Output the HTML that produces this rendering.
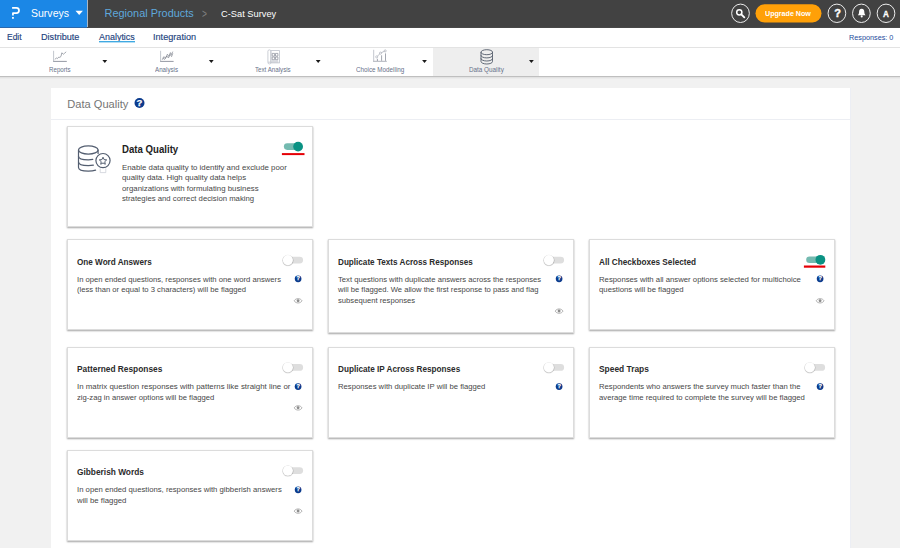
<!DOCTYPE html>
<html><head><meta charset="utf-8"><title>Data Quality</title>
<style>
*{box-sizing:border-box;margin:0;padding:0}
html,body{width:900px;height:548px;overflow:hidden;background:#f1f1f1;font-family:"Liberation Sans",sans-serif}
#r{position:relative;width:900px;height:548px;overflow:hidden}
.b{position:absolute;display:block}
.t{position:absolute;display:block;white-space:nowrap;transform-origin:0 50%}
.card{background:#fff;border:1px solid #dcdcdc;box-shadow:0 1px 1.6px rgba(0,0,0,.36)}
.q{border-radius:50%;background:#0b3b8d;color:#fff;font-weight:bold;text-align:center;-webkit-text-stroke:0.25px #fff}
</style></head><body><div id="r">
<div class="b" style="left:0px;top:0px;width:900px;height:27px;background:#424242;"></div>
<div class="b" style="left:0px;top:27px;width:900px;height:1px;background:#484848;"></div>
<div class="b" style="left:0px;top:0px;width:87px;height:27px;background:#1b87e6;"></div>
<div class="b" style="left:0px;top:27px;width:87px;height:1px;background:#2a68ad;"></div>
<div class="b" style="left:87px;top:0px;width:1px;height:27px;background:#a9b7c5;"></div>
<svg class="b" style="left:9px;top:6px" width="14" height="15" viewBox="0 0 14 15"><path d="M3.1 1.8 H7.4 A2.6 2.6 0 0 1 7.4 7 H3.95 V9.6" fill="none" stroke="#fff" stroke-width="1.75" stroke-linejoin="round"/><rect x="3.05" y="11" width="1.8" height="1.85" rx="0.3" fill="#fff"/></svg>
<span class="t" style="left:31.00px;top:6.70px;font-size:10.5px;line-height:12px;color:#fff;letter-spacing:0.010px;">Surveys</span>
<svg class="b" style="left:74px;top:9px" width="11" height="8" viewBox="0 0 11 8"><path d="M1.5 1.8 H8.9 L5.2 6.1 Z" fill="#fff"/></svg>
<span class="t" style="left:104.50px;top:7.00px;font-size:10.9px;line-height:12px;color:#5fa8dc;letter-spacing:0.019px;">Regional Products</span>
<span class="t" style="left:201.60px;top:7.00px;font-size:12px;line-height:14px;color:#808080;transform:scaleX(0.6984);">&gt;</span>
<span class="t" style="left:221.00px;top:8.00px;font-size:9.9px;line-height:11px;color:#fff;transform:scaleX(0.9398);">C-Sat Survey</span>
<svg class="b" style="left:729px;top:0px" width="22" height="27" viewBox="0 0 22 27"><ellipse cx="11.50" cy="13.30" rx="8.85" ry="9.2" fill="none" stroke="#ececec" stroke-width="1"/></svg>
<svg class="b" style="left:735px;top:8px" width="11" height="11" viewBox="0 0 11 11"><circle cx="4.3" cy="4.3" r="2.6" fill="none" stroke="#fff" stroke-width="1.5"/><path d="M6.3 6.3 L9.3 9.3" stroke="#fff" stroke-width="1.9" stroke-linecap="round"/></svg>
<svg class="b" style="left:754px;top:0px" width="70" height="27" viewBox="0 0 70 27"><rect x="1.5" y="4.3" width="66" height="18.1" rx="9.05" fill="#ffa008"/></svg>
<span class="t" style="left:765.40px;top:9.00px;font-size:8.1px;line-height:9px;color:#fff;font-weight:bold;transform:scaleX(0.8798);">Upgrade Now</span>
<svg class="b" style="left:825px;top:0px" width="22" height="27" viewBox="0 0 22 27"><ellipse cx="11.90" cy="13.30" rx="8.85" ry="9.2" fill="none" stroke="#ececec" stroke-width="1"/></svg>

<span class="t" style="left:834.20px;top:7.00px;font-size:11px;line-height:12px;color:#fff;font-weight:bold;-webkit-text-stroke:0.4px #fff;">?</span>
<svg class="b" style="left:850px;top:0px" width="22" height="27" viewBox="0 0 22 27"><ellipse cx="11.40" cy="13.30" rx="8.85" ry="9.2" fill="none" stroke="#ececec" stroke-width="1"/></svg>
<svg class="b" style="left:856.8px;top:7.9px" width="9.4" height="10.4" viewBox="0 0 10 11"><path d="M5 0.8 C2.9 0.8 2.2 2.6 2.2 4.3 C2.2 6.2 1.4 6.9 0.9 7.7 H9.1 C8.6 6.9 7.8 6.2 7.8 4.3 C7.8 2.6 7.1 0.8 5 0.8 Z" fill="#fff"/><circle cx="5" cy="8.9" r="1.1" fill="#fff"/></svg>
<svg class="b" style="left:875px;top:0px" width="22" height="27" viewBox="0 0 22 27"><ellipse cx="11.00" cy="13.30" rx="8.85" ry="9.2" fill="none" stroke="#ececec" stroke-width="1"/></svg>

<span class="t" style="left:883.40px;top:7.60px;font-size:9.6px;line-height:11px;color:#fff;font-weight:bold;transform:scaleX(0.8505);-webkit-text-stroke:0.3px #fff;">A</span>
<div class="b" style="left:0px;top:28px;width:900px;height:19px;background:#fff;"></div>
<div class="b" style="left:0px;top:47px;width:900px;height:1px;background:#e3e3e3;"></div>
<span class="t" style="left:6.80px;top:31.00px;font-size:9.9px;line-height:11px;color:#1c3f7d;transform:scaleX(0.8572);-webkit-text-stroke:0.15px #1c3f7d;">Edit</span>
<span class="t" style="left:40.90px;top:31.00px;font-size:9.9px;line-height:11px;color:#1c3f7d;transform:scaleX(0.9204);-webkit-text-stroke:0.15px #1c3f7d;">Distribute</span>
<span class="t" style="left:99.20px;top:31.00px;font-size:9.9px;line-height:11px;color:#1c3f7d;transform:scaleX(0.9060);-webkit-text-stroke:0.15px #1c3f7d;">Analytics</span>
<div class="b" style="left:99.2px;top:41px;width:36px;height:1px;background:#3fa9e2;"></div>
<div class="b" style="left:99.2px;top:42px;width:36px;height:1px;background:#b5def4;"></div>
<span class="t" style="left:153.40px;top:31.00px;font-size:9.9px;line-height:11px;color:#1c3f7d;transform:scaleX(0.9235);-webkit-text-stroke:0.15px #1c3f7d;">Integration</span>
<span class="t" style="left:848.60px;top:33.00px;font-size:7.8px;line-height:9px;color:#1c4b9c;transform:scaleX(0.9311);">Responses: 0</span>
<div class="b" style="left:0px;top:48px;width:900px;height:28px;background:#fff;"></div>
<div class="b" style="left:433px;top:48px;width:106.4px;height:28px;background:#eeeeee;"></div>
<div class="b" style="left:0px;top:76px;width:900px;height:1px;background:#bfbfbf;"></div>
<div class="b" style="left:0px;top:77px;width:900px;height:1px;background:#e2e2e2;"></div>
<div class="b" style="left:0px;top:78px;width:900px;height:1px;background:#ebebeb;"></div>
<svg class="b" style="left:53.2px;top:50.2px" width="15" height="13" viewBox="0 0 15 13"><path d="M0.6 0.8V11.4" fill="none" stroke="#b3b7c0" stroke-width="0.8"/><path d="M0.2 11.4H13.8" fill="none" stroke="#878c98" stroke-width="0.9"/><path d="M1.8 9.4 L3.4 8 L4.4 8.6 L5.8 7 L6.8 7.4 L8 6.4 L8.8 2.8 L10.4 4.2 L11.4 3.4 L13.2 1.8" fill="none" stroke="#7d828e" stroke-width="0.7"/></svg>
<span class="t" style="left:48.90px;top:65.00px;font-size:7.2px;line-height:9px;color:#687189;transform:scaleX(0.8581);">Reports</span>
<svg class="b" style="left:101px;top:58px" width="8" height="7" viewBox="0 0 8 7"><path d="M1.40 2.1 H6.20 L3.80 5 Z" fill="#1a1a1a"/></svg>
<svg class="b" style="left:160px;top:50px" width="15" height="13" viewBox="0 0 15 13"><path d="M0.6 0.8V11.4" fill="none" stroke="#b3b7c0" stroke-width="0.8"/><path d="M0.2 11.4H13.6" fill="none" stroke="#878c98" stroke-width="0.9"/><path d="M2.2 9.8 L4 6.6 L5.4 8.4 L7.4 4.2 L8.8 6.4 L10.4 2.6 L11.4 4.6 L12.8 1.6 M2.6 8 L4.6 9.4 L6.8 6 L8.4 8 L10.2 4.4 L11.6 6.6 L12.8 3.4" fill="none" stroke="#6f7480" stroke-width="0.6"/></svg>
<span class="t" style="left:155.25px;top:65.00px;font-size:7.2px;line-height:9px;color:#687189;transform:scaleX(0.8630);">Analysis</span>
<svg class="b" style="left:207px;top:58px" width="8" height="7" viewBox="0 0 8 7"><path d="M1.90 2.1 H6.70 L4.30 5 Z" fill="#1a1a1a"/></svg>
<svg class="b" style="left:266.5px;top:48.5px" width="14" height="16" viewBox="0 0 14 16"><g fill="none" stroke="#bfc3cc" stroke-width="0.8"><rect x="0.9" y="0.9" width="3" height="14" rx="1.4"/><rect x="3.9" y="1.6" width="8.5" height="12.3"/><path d="M1 13.2H11.4"/><path d="M5 11.6H11.2 M5 12.6H11.2" stroke-width="0.5"/></g><path d="M5.2 4.4h2.4v2.7h-2.4z M8.5 4.4h2.4v2.7h-2.4z M5.2 8h2.4v2.7h-2.4z M8.5 8h2.4v2.7h-2.4z" fill="none" stroke="#8d929e" stroke-width="0.75"/></svg>
<span class="t" style="left:255.35px;top:65.00px;font-size:7.2px;line-height:9px;color:#687189;transform:scaleX(0.8593);">Text Analysis</span>
<svg class="b" style="left:314px;top:58px" width="8" height="7" viewBox="0 0 8 7"><path d="M1.80 2.1 H6.60 L4.20 5 Z" fill="#1a1a1a"/></svg>
<svg class="b" style="left:373px;top:49.3px" width="15" height="14" viewBox="0 0 15 14"><path d="M0.7 0.8V12.6" fill="none" stroke="#b3b7c0" stroke-width="0.8"/><path d="M0.2 12.3H13.8" fill="none" stroke="#a5a9b3" stroke-width="0.9"/><path d="M4.4 9.8V12 M8.6 6.3V11.8 M12.5 4.4V11.8" stroke="#8a8f9b" stroke-width="0.8"/><path d="M3.7 7.9 L7.5 4.1 L12.2 1.9" fill="none" stroke="#8f94a0" stroke-width="0.6"/><g fill="#fff" stroke="#9ea3ae" stroke-width="0.6"><circle cx="3.7" cy="7.9" r="1.05"/><circle cx="7.5" cy="4.1" r="1.05"/><circle cx="12.2" cy="1.9" r="1.05"/></g></svg>
<span class="t" style="left:355.85px;top:65.00px;font-size:7.2px;line-height:9px;color:#687189;transform:scaleX(0.8759);">Choice Modelling</span>
<svg class="b" style="left:421px;top:58px" width="8" height="7" viewBox="0 0 8 7"><path d="M1.10 2.1 H5.90 L3.50 5 Z" fill="#1a1a1a"/></svg>
<svg class="b" style="left:479.6px;top:48.6px" width="13.6" height="16" viewBox="0 0 15 16" preserveAspectRatio="none"><ellipse cx="7.5" cy="3.2" rx="6.4" ry="2.5" fill="none" stroke="#4a5362" stroke-width="0.9"/><path d="M1.1 3.2V12.4C1.1 13.9 4 15 7.5 15S13.9 13.9 13.9 12.4V3.2 M1.1 6.3C1.1 7.8 4 8.9 7.5 8.9S13.9 7.8 13.9 6.3 M1.1 9.4C1.1 10.9 4 12 7.5 12S13.9 10.9 13.9 9.4" fill="none" stroke="#4a5362" stroke-width="0.9"/></svg>
<span class="t" style="left:469.00px;top:65.00px;font-size:7.2px;line-height:9px;color:#687189;transform:scaleX(0.8796);">Data Quality</span>
<svg class="b" style="left:528px;top:58px" width="8" height="7" viewBox="0 0 8 7"><path d="M1.00 2.1 H5.80 L3.40 5 Z" fill="#1a1a1a"/></svg>
<div class="b" style="left:51px;top:88px;width:800px;height:470px;background:#fff;border-right:1px solid #eceef4;"></div>
<span class="t" style="left:67.20px;top:98.00px;font-size:11.1px;line-height:12px;color:#757575;letter-spacing:0.014px;">Data Quality</span>
<svg class="b" style="left:133px;top:97px" width="13" height="13" viewBox="0 0 13 13"><circle cx="6.50" cy="6.00" r="5.00" fill="#0b3b8d"/><text x="6.50" y="8.85" text-anchor="middle" font-family="Liberation Sans, sans-serif" font-weight="bold" font-size="9.5" fill="#fff" stroke="#fff" stroke-width="0.25">?</text></svg>
<div class="b" style="left:51px;top:119px;width:800px;height:1px;background:#eceef3;"></div>
<div class="b card" style="left:67px;top:126px;width:246px;height:101px"></div>
<span class="t" style="left:122.10px;top:144.30px;font-size:10.2px;line-height:11px;color:#222;font-weight:bold;transform:scaleX(0.9453);">Data Quality</span>
<span class="t" style="left:122.10px;top:163.00px;font-size:8.0px;line-height:9px;color:#474747;transform:scaleX(0.9802);">Enable data quality to identify and exclude poor</span>
<span class="t" style="left:122.10px;top:173.45px;font-size:8.0px;line-height:9px;color:#474747;transform:scaleX(0.9825);">quality data. High quality data helps</span>
<span class="t" style="left:122.10px;top:183.90px;font-size:8.0px;line-height:9px;color:#474747;transform:scaleX(0.9782);">organizations with formulating business</span>
<span class="t" style="left:122.10px;top:194.35px;font-size:8.0px;line-height:9px;color:#474747;transform:scaleX(0.9677);">strategies and correct decision making</span>
<svg class="b" style="left:278px;top:138px" width="44" height="20" viewBox="0 0 44 20"><rect x="5.90" y="5.30" width="17" height="6.6" rx="3.3" fill="#74bab0"/><circle cx="20.10" cy="8.60" r="4.9" fill="#0a9283"/><rect x="3.90" y="15.10" width="22.6" height="2" fill="#e50006"/></svg>
<svg class="b" style="left:76px;top:143px" width="37" height="32" viewBox="0 0 37 32"><g fill="none" stroke="#535e70" stroke-width="1.2" stroke-linecap="round"><ellipse cx="12.3" cy="7" rx="9.8" ry="4.05"/><path d="M2.5 7V24.6C2.5 26.8 6.6 28.2 12.3 28.2 C15.2 28.2 17.7 27.8 19.6 27.1"/><path d="M2.5 13.2C2.5 15.4 6.6 16.8 12.3 16.8 C14 16.8 15.5 16.65 16.8 16.4"/><path d="M2.5 19C2.5 21.2 6.6 22.6 12.3 22.6 C14.2 22.6 15.9 22.45 17.4 22.15"/><path d="M22.1 7V10.4"/><circle cx="27" cy="17.6" r="7.1" fill="#fff"/></g><path d="M27.00 14.20 L28.09 16.60 L30.71 16.89 L28.76 18.67 L29.29 21.26 L27.00 19.95 L24.71 21.26 L25.24 18.67 L23.29 16.89 L25.91 16.60 Z" fill="none" stroke="#535e70" stroke-width="1" stroke-linejoin="round"/><path d="M24.2 25.4V29.6H29.8V25.4" fill="none" stroke="#c5cad2" stroke-width="0.7"/></svg>
<div class="b card" style="left:67px;top:239px;width:246px;height:91px"></div>
<span class="t" style="left:76.70px;top:256.00px;font-size:9.7px;line-height:11px;color:#2b2b2b;font-weight:bold;transform:scaleX(0.8409);">One Word Answers</span>
<span class="t" style="left:76.70px;top:275.00px;font-size:7.9px;line-height:9px;color:#474747;transform:scaleX(0.9729);">In open ended questions, responses with one word answers</span>
<span class="t" style="left:76.70px;top:285.00px;font-size:7.9px;line-height:9px;color:#474747;transform:scaleX(0.9711);">(less than or equal to 3 characters) will be flagged</span>
<svg class="b" style="left:267px;top:252px" width="44" height="20" viewBox="0 0 44 20"><rect x="17.90" y="4.70" width="18.2" height="6.8" rx="3.4" fill="#dedede"/><circle cx="20.90" cy="8.60" r="5.75" fill="#000" opacity="0.08"/><circle cx="20.90" cy="8.40" r="5.4" fill="#000" opacity="0.17"/><circle cx="20.90" cy="8.10" r="5.05" fill="#fff"/></svg>
<svg class="b" style="left:293px;top:274px" width="10" height="10" viewBox="0 0 10 10"><circle cx="5.10" cy="4.80" r="3.35" fill="#0b3b8d"/><text x="5.10" y="6.48" text-anchor="middle" font-family="Liberation Sans, sans-serif" font-weight="bold" font-size="5.6" fill="#fff" stroke="#fff" stroke-width="0.25">?</text></svg>
<svg class="b" style="left:292px;top:296px" width="12" height="9" viewBox="0 0 12 9"><path d="M2.20 4.80 C3.70 1.90 8.50 1.90 10.00 4.80 C8.50 7.70 3.70 7.70 2.20 4.80 Z" fill="none" stroke="#959595" stroke-width="0.7"/><circle cx="6.10" cy="4.70" r="1.45" fill="#8c8c8c"/></svg>
<div class="b card" style="left:328px;top:239px;width:246px;height:94px"></div>
<span class="t" style="left:337.70px;top:256.00px;font-size:9.7px;line-height:11px;color:#2b2b2b;font-weight:bold;transform:scaleX(0.8401);">Duplicate Texts Across Responses</span>
<span class="t" style="left:337.70px;top:275.00px;font-size:7.9px;line-height:9px;color:#474747;transform:scaleX(0.9708);">Text questions with duplicate answers across the responses</span>
<span class="t" style="left:337.70px;top:285.00px;font-size:7.9px;line-height:9px;color:#474747;transform:scaleX(0.9686);">will be flagged. We allow the first response to pass and flag</span>
<span class="t" style="left:337.70px;top:296.00px;font-size:7.9px;line-height:9px;color:#474747;transform:scaleX(0.9710);">subsequent responses</span>
<svg class="b" style="left:528px;top:252px" width="44" height="20" viewBox="0 0 44 20"><rect x="17.90" y="4.70" width="18.2" height="6.8" rx="3.4" fill="#dedede"/><circle cx="20.90" cy="8.60" r="5.75" fill="#000" opacity="0.08"/><circle cx="20.90" cy="8.40" r="5.4" fill="#000" opacity="0.17"/><circle cx="20.90" cy="8.10" r="5.05" fill="#fff"/></svg>
<svg class="b" style="left:554px;top:274px" width="10" height="10" viewBox="0 0 10 10"><circle cx="5.10" cy="4.80" r="3.35" fill="#0b3b8d"/><text x="5.10" y="6.48" text-anchor="middle" font-family="Liberation Sans, sans-serif" font-weight="bold" font-size="5.6" fill="#fff" stroke="#fff" stroke-width="0.25">?</text></svg>
<svg class="b" style="left:553px;top:307px" width="12" height="9" viewBox="0 0 12 9"><path d="M2.20 4.10 C3.70 1.20 8.50 1.20 10.00 4.10 C8.50 7.00 3.70 7.00 2.20 4.10 Z" fill="none" stroke="#959595" stroke-width="0.7"/><circle cx="6.10" cy="4.00" r="1.45" fill="#8c8c8c"/></svg>
<div class="b card" style="left:589px;top:239px;width:246px;height:91px"></div>
<span class="t" style="left:598.70px;top:256.00px;font-size:9.7px;line-height:11px;color:#2b2b2b;font-weight:bold;transform:scaleX(0.8466);">All Checkboxes Selected</span>
<span class="t" style="left:598.70px;top:275.00px;font-size:7.9px;line-height:9px;color:#474747;transform:scaleX(0.9815);">Responses with all answer options selected for multichoice</span>
<span class="t" style="left:598.70px;top:285.00px;font-size:7.9px;line-height:9px;color:#474747;transform:scaleX(0.9839);">questions will be flagged</span>
<svg class="b" style="left:800px;top:251px" width="44" height="20" viewBox="0 0 44 20"><rect x="6.20" y="5.50" width="17" height="6.6" rx="3.3" fill="#74bab0"/><circle cx="20.40" cy="8.80" r="4.9" fill="#0a9283"/><rect x="3.90" y="14.50" width="21.4" height="2.2" fill="#e50006"/></svg>
<svg class="b" style="left:815px;top:274px" width="10" height="10" viewBox="0 0 10 10"><circle cx="5.10" cy="4.80" r="3.35" fill="#0b3b8d"/><text x="5.10" y="6.48" text-anchor="middle" font-family="Liberation Sans, sans-serif" font-weight="bold" font-size="5.6" fill="#fff" stroke="#fff" stroke-width="0.25">?</text></svg>
<svg class="b" style="left:814px;top:296px" width="12" height="9" viewBox="0 0 12 9"><path d="M2.20 4.80 C3.70 1.90 8.50 1.90 10.00 4.80 C8.50 7.70 3.70 7.70 2.20 4.80 Z" fill="none" stroke="#959595" stroke-width="0.7"/><circle cx="6.10" cy="4.70" r="1.45" fill="#8c8c8c"/></svg>
<div class="b card" style="left:67px;top:347px;width:246px;height:91px"></div>
<span class="t" style="left:76.70px;top:362.60px;font-size:9.7px;line-height:11px;color:#2b2b2b;font-weight:bold;transform:scaleX(0.8611);">Patterned Responses</span>
<span class="t" style="left:76.70px;top:382.00px;font-size:7.9px;line-height:9px;color:#474747;transform:scaleX(0.9991);">In matrix question responses with patterns like straight line or</span>
<span class="t" style="left:76.70px;top:393.00px;font-size:7.9px;line-height:9px;color:#474747;transform:scaleX(0.9714);">zig-zag in answer options will be flagged</span>
<svg class="b" style="left:267px;top:359px" width="44" height="20" viewBox="0 0 44 20"><rect x="17.90" y="5.00" width="18.2" height="6.8" rx="3.4" fill="#dedede"/><circle cx="20.90" cy="8.90" r="5.75" fill="#000" opacity="0.08"/><circle cx="20.90" cy="8.70" r="5.4" fill="#000" opacity="0.17"/><circle cx="20.90" cy="8.40" r="5.05" fill="#fff"/></svg>
<svg class="b" style="left:293px;top:382px" width="10" height="10" viewBox="0 0 10 10"><circle cx="5.10" cy="4.60" r="3.35" fill="#0b3b8d"/><text x="5.10" y="6.28" text-anchor="middle" font-family="Liberation Sans, sans-serif" font-weight="bold" font-size="5.6" fill="#fff" stroke="#fff" stroke-width="0.25">?</text></svg>
<svg class="b" style="left:292px;top:403px" width="12" height="9" viewBox="0 0 12 9"><path d="M2.20 4.90 C3.70 2.00 8.50 2.00 10.00 4.90 C8.50 7.80 3.70 7.80 2.20 4.90 Z" fill="none" stroke="#959595" stroke-width="0.7"/><circle cx="6.10" cy="4.80" r="1.45" fill="#8c8c8c"/></svg>
<div class="b card" style="left:328px;top:347px;width:246px;height:91px"></div>
<span class="t" style="left:337.70px;top:362.60px;font-size:9.7px;line-height:11px;color:#2b2b2b;font-weight:bold;transform:scaleX(0.8437);">Duplicate IP Across Responses</span>
<span class="t" style="left:337.70px;top:382.00px;font-size:7.9px;line-height:9px;color:#474747;transform:scaleX(0.9749);">Responses with duplicate IP will be flagged</span>
<svg class="b" style="left:528px;top:359px" width="44" height="20" viewBox="0 0 44 20"><rect x="17.90" y="5.00" width="18.2" height="6.8" rx="3.4" fill="#dedede"/><circle cx="20.90" cy="8.90" r="5.75" fill="#000" opacity="0.08"/><circle cx="20.90" cy="8.70" r="5.4" fill="#000" opacity="0.17"/><circle cx="20.90" cy="8.40" r="5.05" fill="#fff"/></svg>
<svg class="b" style="left:554px;top:382px" width="10" height="10" viewBox="0 0 10 10"><circle cx="5.10" cy="4.60" r="3.35" fill="#0b3b8d"/><text x="5.10" y="6.28" text-anchor="middle" font-family="Liberation Sans, sans-serif" font-weight="bold" font-size="5.6" fill="#fff" stroke="#fff" stroke-width="0.25">?</text></svg>
<div class="b card" style="left:589px;top:347px;width:246px;height:91px"></div>
<span class="t" style="left:598.70px;top:362.60px;font-size:9.7px;line-height:11px;color:#2b2b2b;font-weight:bold;transform:scaleX(0.8662);">Speed Traps</span>
<span class="t" style="left:598.70px;top:382.00px;font-size:7.9px;line-height:9px;color:#474747;transform:scaleX(0.9712);">Respondents who answers the survey much faster than the</span>
<span class="t" style="left:598.70px;top:393.00px;font-size:7.9px;line-height:9px;color:#474747;transform:scaleX(0.9779);">average time required to complete the survey will be flagged</span>
<svg class="b" style="left:789px;top:359px" width="44" height="20" viewBox="0 0 44 20"><rect x="17.90" y="5.00" width="18.2" height="6.8" rx="3.4" fill="#dedede"/><circle cx="20.90" cy="8.90" r="5.75" fill="#000" opacity="0.08"/><circle cx="20.90" cy="8.70" r="5.4" fill="#000" opacity="0.17"/><circle cx="20.90" cy="8.40" r="5.05" fill="#fff"/></svg>
<svg class="b" style="left:815px;top:382px" width="10" height="10" viewBox="0 0 10 10"><circle cx="5.10" cy="4.60" r="3.35" fill="#0b3b8d"/><text x="5.10" y="6.28" text-anchor="middle" font-family="Liberation Sans, sans-serif" font-weight="bold" font-size="5.6" fill="#fff" stroke="#fff" stroke-width="0.25">?</text></svg>
<div class="b card" style="left:67px;top:450px;width:246px;height:91px"></div>
<span class="t" style="left:76.70px;top:466.00px;font-size:9.7px;line-height:11px;color:#2b2b2b;font-weight:bold;transform:scaleX(0.8591);">Gibberish Words</span>
<span class="t" style="left:76.70px;top:485.00px;font-size:7.9px;line-height:9px;color:#474747;transform:scaleX(0.9788);">In open ended questions, responses with gibberish answers</span>
<span class="t" style="left:76.70px;top:496.00px;font-size:7.9px;line-height:9px;color:#474747;transform:scaleX(0.9877);">will be flagged</span>
<svg class="b" style="left:267px;top:462px" width="44" height="20" viewBox="0 0 44 20"><rect x="17.90" y="5.20" width="18.2" height="6.8" rx="3.4" fill="#dedede"/><circle cx="20.90" cy="9.10" r="5.75" fill="#000" opacity="0.08"/><circle cx="20.90" cy="8.90" r="5.4" fill="#000" opacity="0.17"/><circle cx="20.90" cy="8.60" r="5.05" fill="#fff"/></svg>
<svg class="b" style="left:293px;top:485px" width="10" height="10" viewBox="0 0 10 10"><circle cx="5.10" cy="4.80" r="3.35" fill="#0b3b8d"/><text x="5.10" y="6.48" text-anchor="middle" font-family="Liberation Sans, sans-serif" font-weight="bold" font-size="5.6" fill="#fff" stroke="#fff" stroke-width="0.25">?</text></svg>
<svg class="b" style="left:292px;top:507px" width="12" height="9" viewBox="0 0 12 9"><path d="M2.20 4.10 C3.70 1.20 8.50 1.20 10.00 4.10 C8.50 7.00 3.70 7.00 2.20 4.10 Z" fill="none" stroke="#959595" stroke-width="0.7"/><circle cx="6.10" cy="4.00" r="1.45" fill="#8c8c8c"/></svg>
</div></body></html>
